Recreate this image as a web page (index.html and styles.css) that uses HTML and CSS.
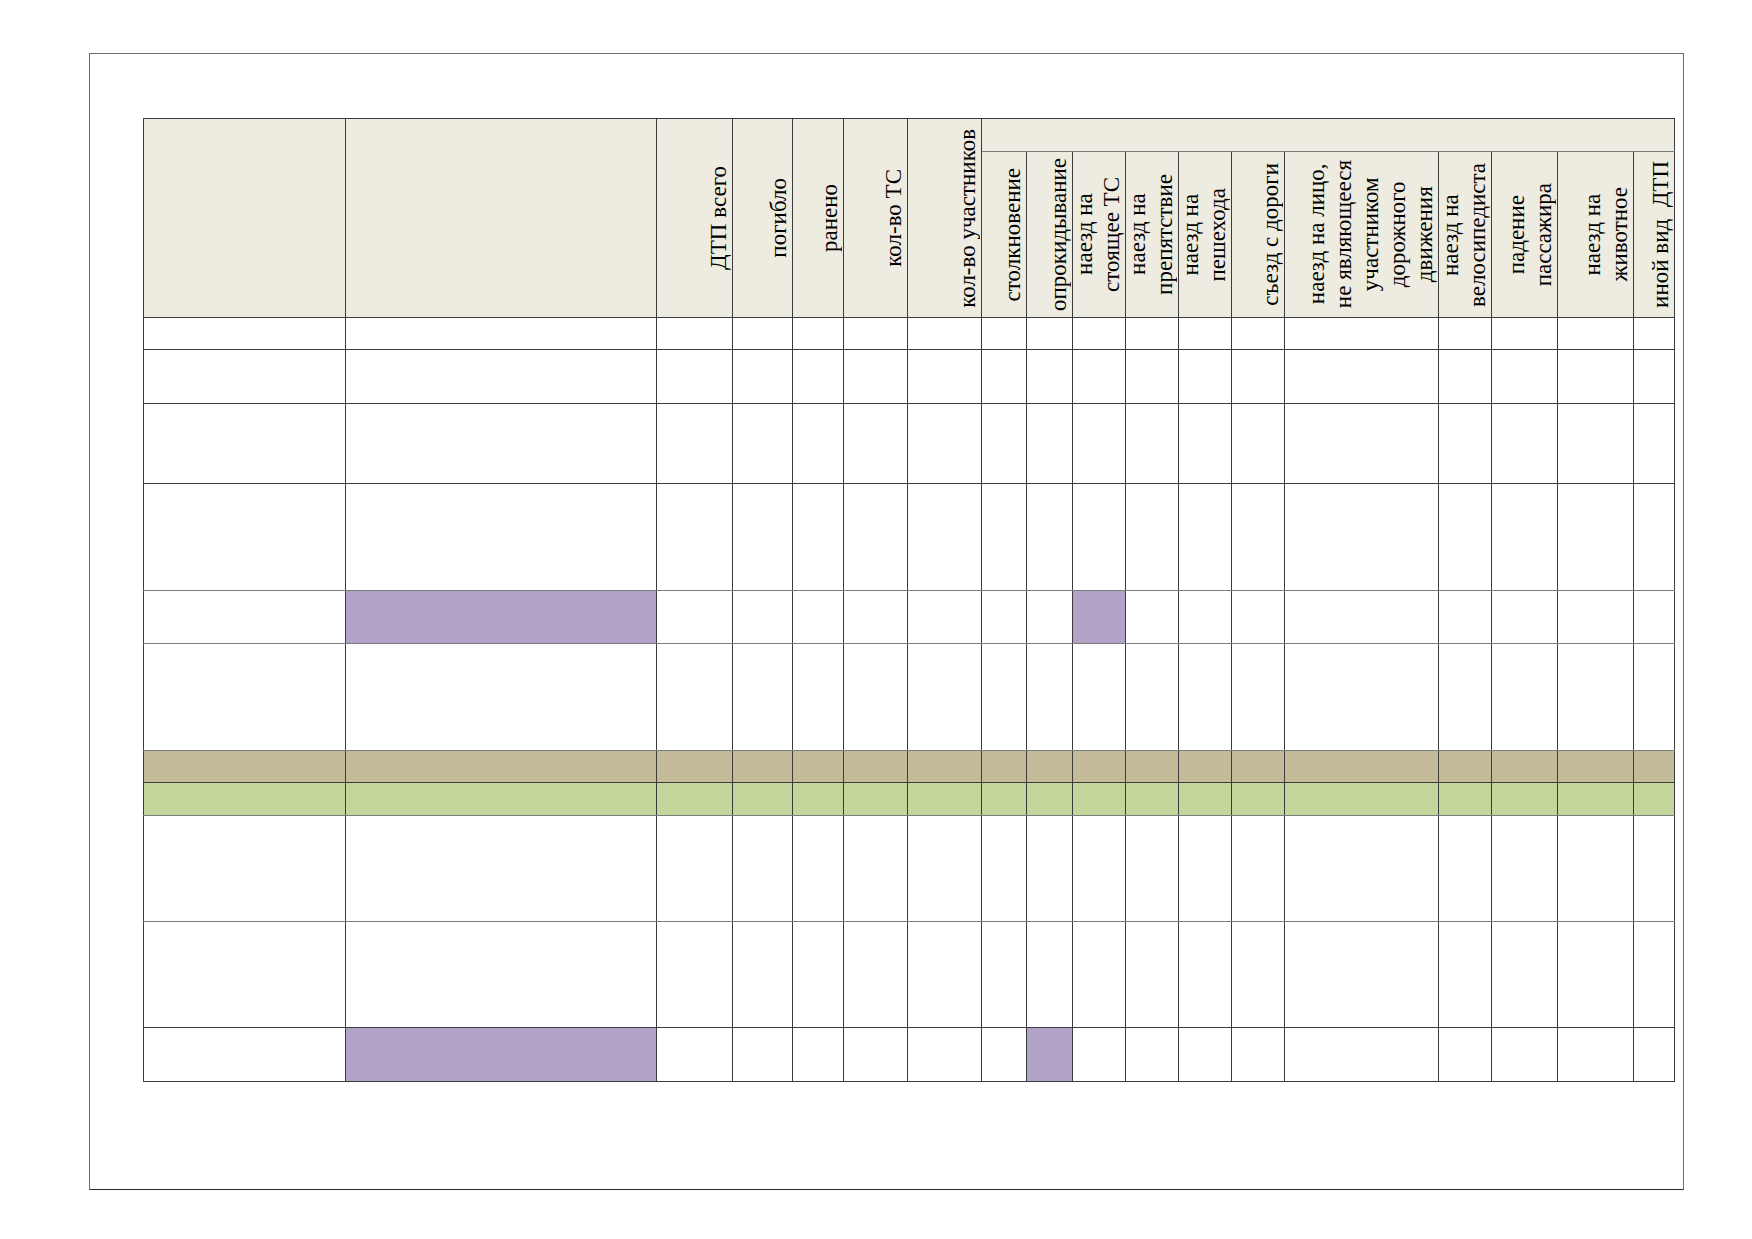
FILE: index.html
```html
<!DOCTYPE html>
<html lang="ru">
<head>
<meta charset="utf-8">
<title>ДТП</title>
<link rel="stylesheet" href="styles.css">
</head>
<body>
<div class="page">
  <div class="frame">
    <table class="grid">
      <colgroup>
        <col class="w202"><col class="w311"><col class="w76"><col class="w60"><col class="w51"><col class="w64"><col class="w74">
        <col class="w45"><col class="w46"><col class="w53"><col class="w53"><col class="w53"><col class="w53"><col class="w154"><col class="w53"><col class="w66"><col class="w76"><col class="w41">
      </colgroup>
      <thead>
        <tr class="h1">
          <td rowspan="2" class="hd"></td>
          <td rowspan="2" class="hd"></td>
          <td rowspan="2" class="hd"><div class="vbox full"><span class="vt">ДТП всего</span></div></td>
          <td rowspan="2" class="hd"><div class="vbox full"><span class="vt">погибло</span></div></td>
          <td rowspan="2" class="hd"><div class="vbox full"><span class="vt">ранено</span></div></td>
          <td rowspan="2" class="hd"><div class="vbox full"><span class="vt">кол-во ТС</span></div></td>
          <td rowspan="2" class="hd"><div class="vbox full"><span class="vt">кол-во участников</span></div></td>
          <td colspan="11" class="hd sub"></td>
        </tr>
        <tr class="h2">
          <td class="hd"><div class="vbox"><span class="vt">столкновение</span></div></td>
          <td class="hd"><div class="vbox"><span class="vt">опрокидывание</span></div></td>
          <td class="hd"><div class="vbox"><span class="vt">наезд на<br>стоящее ТС</span></div></td>
          <td class="hd"><div class="vbox"><span class="vt">наезд на<br>препятствие</span></div></td>
          <td class="hd"><div class="vbox"><span class="vt">наезд на<br>пешехода</span></div></td>
          <td class="hd"><div class="vbox"><span class="vt">съезд с дороги</span></div></td>
          <td class="hd"><div class="vbox"><span class="vt">наезд на лицо,<br>не являющееся<br>участником<br>дорожного<br>движения</span></div></td>
          <td class="hd"><div class="vbox"><span class="vt">наезд на<br>велосипедиста</span></div></td>
          <td class="hd"><div class="vbox"><span class="vt">падение<br>пассажира</span></div></td>
          <td class="hd"><div class="vbox"><span class="vt">наезд на<br>животное</span></div></td>
          <td class="hd"><div class="vbox"><span class="vt">иной вид&nbsp; ДТП</span></div></td>
        </tr>
      </thead>
      <tbody>
        <tr class="r32"><td></td><td></td><td></td><td></td><td></td><td></td><td></td><td></td><td></td><td></td><td></td><td></td><td></td><td></td><td></td><td></td><td></td><td></td></tr>
        <tr class="r54"><td></td><td></td><td></td><td></td><td></td><td></td><td></td><td></td><td></td><td></td><td></td><td></td><td></td><td></td><td></td><td></td><td></td><td></td></tr>
        <tr class="r80"><td></td><td></td><td></td><td></td><td></td><td></td><td></td><td></td><td></td><td></td><td></td><td></td><td></td><td></td><td></td><td></td><td></td><td></td></tr>
        <tr class="r107 soft"><td></td><td></td><td></td><td></td><td></td><td></td><td></td><td></td><td></td><td></td><td></td><td></td><td></td><td></td><td></td><td></td><td></td><td></td></tr>
        <tr class="r53 soft"><td></td><td class="violet"></td><td></td><td></td><td></td><td></td><td></td><td></td><td></td><td class="violet"></td><td></td><td></td><td></td><td></td><td></td><td></td><td></td><td></td></tr>
        <tr class="r107 soft"><td></td><td></td><td></td><td></td><td></td><td></td><td></td><td></td><td></td><td></td><td></td><td></td><td></td><td></td><td></td><td></td><td></td><td></td></tr>
        <tr class="r32 tan"><td></td><td></td><td></td><td></td><td></td><td></td><td></td><td></td><td></td><td></td><td></td><td></td><td></td><td></td><td></td><td></td><td></td><td></td></tr>
        <tr class="r33 green soft"><td></td><td></td><td></td><td></td><td></td><td></td><td></td><td></td><td></td><td></td><td></td><td></td><td></td><td></td><td></td><td></td><td></td><td></td></tr>
        <tr class="r106 soft"><td></td><td></td><td></td><td></td><td></td><td></td><td></td><td></td><td></td><td></td><td></td><td></td><td></td><td></td><td></td><td></td><td></td><td></td></tr>
        <tr class="r106"><td></td><td></td><td></td><td></td><td></td><td></td><td></td><td></td><td></td><td></td><td></td><td></td><td></td><td></td><td></td><td></td><td></td><td></td></tr>
        <tr class="r54"><td></td><td class="violet"></td><td></td><td></td><td></td><td></td><td></td><td></td><td class="violet"></td><td></td><td></td><td></td><td></td><td></td><td></td><td></td><td></td><td></td></tr>
      </tbody>
    </table>
  </div>
</div>
</body>
</html>
```
FILE: styles.css
```css
html, body {
  margin: 0;
  padding: 0;
  background: #ffffff;
}

body {
  font-family: "Liberation Serif", "Times New Roman", serif;
  color: #000000;
}

.page {
  padding: 53px 0 0 89px;
}

.frame {
  box-sizing: border-box;
  width: 1595px;
  height: 1137px;
  border: 1px solid #6e6e6e;
  border-bottom-color: #2a2a2a;
  padding: 64px 0 0 53px;
}

.grid {
  border-collapse: collapse;
  table-layout: fixed;
  width: 1531px;
  border: 1px solid #2a2a2a;
  border-right-color: #808080;
}

.grid td {
  border: 1px solid #3c3c3c;
  padding: 0;
  height: auto;
}

.w202 { width: 202px; }
.w311 { width: 311px; }
.w76 { width: 76px; }
.w60 { width: 60px; }
.w51 { width: 51px; }
.w64 { width: 64px; }
.w74 { width: 74px; }
.w45 { width: 45px; }
.w46 { width: 46px; }
.w53 { width: 53px; }
.w154 { width: 154px; }
.w66 { width: 66px; }
.w41 { width: 41px; }

.hd {
  background: #eeebe1;
}

.grid .sub {
  border-bottom-color: #7a7a7a;
}

.h1 td { height: 32px; }
.h2 td { height: 165px; }

.vbox {
  display: flex;
  align-items: center;
  justify-content: flex-end;
  height: 165px;
  overflow: hidden;
}

.vbox.full {
  height: 198px;
}

.vt {
  writing-mode: vertical-rl;
  transform: rotate(180deg);
  text-align: center;
  font-size: 23px;
  line-height: 27px;
  white-space: nowrap;
}

.r32 td { height: 31px; }
.r33 td { height: 32px; }
.r53 td { height: 52px; }
.r54 td { height: 53px; }
.r80 td { height: 79px; }
.r106 td { height: 105px; }
.r107 td { height: 106px; }

.grid .soft td {
  border-bottom-color: #7c7c7c;
}

.tan td { background: #c4bc98; }
.green td { background: #c3d79d; }
.grid td.violet { background: #b1a2c8; }
```
